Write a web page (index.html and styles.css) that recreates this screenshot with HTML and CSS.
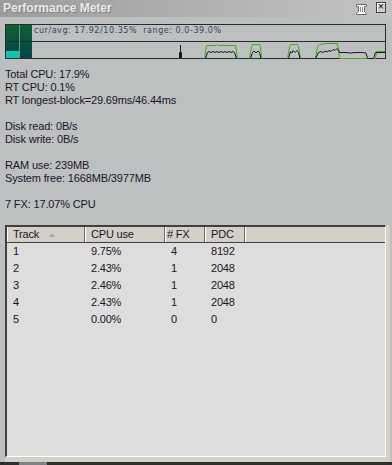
FILE: index.html
```html
<!DOCTYPE html>
<html lang="en">
<head>
    <meta charset="UTF-8">
    <title>Performance Meter</title>
    <link rel="stylesheet" href="styles.css">
</head>
<body>
    <div class="titlebar">
        <span class="title">Performance Meter</span>
        <span class="tb-buttons">
            <svg class="pin" width="12" height="12" viewBox="0 0 12 12">
                <path d="M0.5 0.5H10.5V2.5H8.5V7.5L10.5 9.5V10.5H0.5V9.5L2.5 7.5V2.5H0.5Z" fill="#fff" stroke="#6a6a6a"/>
                <path d="M4.5 3V8M6.5 3V8" stroke="#8a8a8a"/>
            </svg>
            <span class="close">&times;</span>
        </span>
    </div>

    <div class="meter">
        <div class="vu">
            <div class="vu-col"><div class="vu-peak"></div></div>
            <div class="vu-col"></div>
        </div>
        <div class="graph">
            <div class="graph-text">cur/avg: 17.92/10.35%&nbsp; range: 0.0-39.0%</div>
            <svg class="plot" width="353" height="16" viewBox="32 42 353 16">
                <!-- peak (green) -->
                <polyline fill="none" stroke="#3fae14" points="204.5,58.5 206.5,45.5 216,45.5 217,44.5 218,45.5 235.5,45.5 237.5,58.5"/>
                <polyline fill="none" stroke="#3fae14" points="249.5,58.5 251.5,46.5 252.5,44.5 259.5,44.5 260.5,46.5 261.5,58.5"/>
                <polyline fill="none" stroke="#3fae14" points="287.5,58.5 289.5,46.5 290.5,44.5 297.5,44.5 298.5,46.5 300.5,58.5"/>
                <polyline fill="none" stroke="#3fae14" points="315.5,58.5 317.5,46.5 319.5,44.5 326,43.5 337.5,43.5 339.5,58.5 375.5,58.5 376.5,51.5 385,51.5"/>
                <!-- current (black) -->
                <path fill="none" stroke="#1a1a1a" d="M180.5 58V45M179.5 58V52.5H181.5V58"/>
                <polyline fill="none" stroke="#1a1a1a" points="205.5,58.5 207.5,52.5 209,51.5 211,52.5 213,51.5 215,52.5 217,51.5 219,52.5 221,51.5 223,52.5 225,51.5 227,52.5 229,51.5 231,52.5 233,51.5 234.5,52.5 236.5,58.5"/>
                <polyline fill="none" stroke="#1a1a1a" points="250.5,58.5 252.5,52.5 254,51 256,53 258,51 259.5,52.5 261,58.5"/>
                <polyline fill="none" stroke="#1a1a1a" points="288.5,58.5 290.5,51.5 292,53 293,50.5 295,52.5 297,50.5 298.5,52.5 300,58.5"/>
                <polyline fill="none" stroke="#1a1a1a" points="315.5,58.5 318.5,52.5 321,51.5 323,52.5 325,51 327,52 329,50.5 331,51.5 333,49.5 335,50.5 337,48.5 338.5,50 339.5,52.5 346,52.5 350,53 356,52.5 362,52.5 366,53 367.5,58.5 373.5,58.5 375.5,52.5 385,52.5"/>
            </svg>
        </div>
    </div>

    <div class="stats">
        <div>Total CPU: 17.9%</div>
        <div>RT CPU: 0.1%</div>
        <div>RT longest-block=29.69ms/46.44ms</div>
        <div>&nbsp;</div>
        <div>Disk read: 0B/s</div>
        <div>Disk write: 0B/s</div>
        <div>&nbsp;</div>
        <div>RAM use: 239MB</div>
        <div>System free: 1668MB/3977MB</div>
        <div>&nbsp;</div>
        <div>7 FX: 17.07% CPU</div>
    </div>

    <div class="listwrap">
        <div class="list">
            <div class="list-head">
                <div class="hcell">Track<span class="sort"></span></div>
                <div class="hcell">CPU use</div>
                <div class="hcell fx">#&nbsp;FX</div>
                <div class="hcell">PDC</div>
                <div class="hcell"></div>
            </div>
            <div class="row"><span>1</span><span>9.75%</span><span>4</span><span>8192</span></div>
            <div class="row"><span>2</span><span>2.43%</span><span>1</span><span>2048</span></div>
            <div class="row"><span>3</span><span>2.46%</span><span>1</span><span>2048</span></div>
            <div class="row"><span>4</span><span>2.43%</span><span>1</span><span>2048</span></div>
            <div class="row"><span>5</span><span>0.00%</span><span>0</span><span>0</span></div>
        </div>
    </div>

    <div class="taskbar"><span class="task"></span></div>
</body>
</html>
```

FILE: styles.css
```css
html, body {
    margin: 0;
    padding: 0;
    background: #bcc0c1;
    font-family: "Liberation Sans", Arial, sans-serif;
    font-size: 11px;
    color: #1e1428;
}
body {
    width: 392px;
    height: 465px;
    overflow: hidden;
}
.titlebar {
    height: 17px;
    display: flex;
    align-items: center;
    justify-content: space-between;
    background: linear-gradient(to right, #9c9c9c, #c4c4c4);
}
.title {
    padding-left: 3px;
    font-size: 12px;
    font-weight: bold;
    line-height: 17px;
    color: #e8e8e8;
    text-shadow: 1px 1px 0 #858585;
}
.tb-buttons {
    display: flex;
    align-items: center;
    gap: 8px;
    padding-right: 6px;
}
.pin {
    display: block;
    margin-top: 3px;
}
.close {
    width: 8px;
    height: 9px;
    background: #d4d0c8;
    border: 1px solid #404040;
    box-shadow: inset 1px 1px 0 #fff;
    font-size: 10px;
    line-height: 8px;
    text-align: center;
    color: #000;
    margin-top: -2px;
}

/* meter */
.meter {
    display: flex;
    height: 33px;
    margin: 7px 6px 0 5px;
    border: 1px solid #2b2b2b;
}
.vu {
    display: flex;
    gap: 1px;
    width: 26px;
    background: #6e978a;
}
.vu-col {
    position: relative;
    width: 12px;
    background:
        linear-gradient(to bottom, transparent 16px, #173030 16px, #173030 17px, transparent 17px),
        linear-gradient(#0e6233, #02444a);
}
.vu-col:first-child {
    width: 13px;
}
.vu-peak {
    position: absolute;
    left: 0;
    right: 0;
    bottom: 0;
    height: 7px;
    background: #12c2b2;
}
.graph {
    flex: 1;
    display: flex;
    flex-direction: column;
}
.graph-text {
    height: 16px;
    border-bottom: 1px solid #2b2b2b;
    padding-left: 2px;
    font-family: "DejaVu Sans", Verdana, sans-serif;
    font-size: 8px;
    line-height: 12px;
    letter-spacing: 0.55px;
    color: #34475c;
    white-space: pre;
}
.plot {
    display: block;
    overflow: visible;
}

/* stats */
.stats {
    padding: 9px 5px 0;
    line-height: 13px;
    letter-spacing: -0.15px;
}

/* list */
.listwrap {
    margin: 14px 2px 0 5px;
    border-right: 4px solid #d4d0c8;
    border-bottom: 5px solid #d4d0c8;
}
.list {
    height: 229px;
    background: #dcdddc;
    border-top: 2px solid #404040;
    border-left: 2px solid #404040;
    border-right: 1px solid #fff;
    border-bottom: 1px solid #fff;
    letter-spacing: -0.2px;
}
.list-head, .row {
    display: grid;
    grid-template-columns: 78px 80px 40px 40px 1fr;
}
.list-head {
    height: 15px;
    background: #d4d0c8;
    border-bottom: 1px solid #404040;
}
.hcell {
    display: flex;
    align-items: center;
    padding-left: 5px;
    border-left: 1px solid #fff;
    border-right: 1px solid #6c6c6c;
    line-height: 15px;
}
.hcell:last-child {
    border-right: none;
}
.hcell.fx {
    padding-left: 1px;
}
.sort {
    margin-left: 10px;
    width: 0;
    height: 0;
    border-left: 3px solid transparent;
    border-right: 3px solid transparent;
    border-bottom: 4px solid #a8a8a8;
}
.row {
    height: 17px;
    line-height: 17px;
}
.row span {
    padding-left: 6px;
}

.taskbar {
    height: 3px;
    background: #2e2e2e;
}
.task {
    display: block;
    margin-left: 19px;
    width: 28px;
    height: 3px;
    background: #7c8288;
}
```
